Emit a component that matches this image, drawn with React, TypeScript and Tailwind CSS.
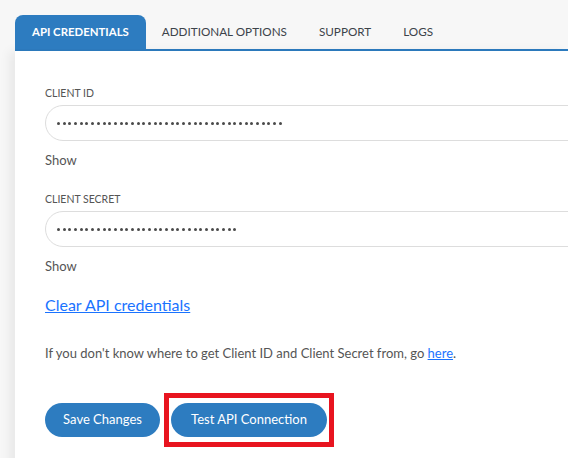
import React from "react";

const font = { fontFamily: "Lato, 'Open Sans', sans-serif" };

function Dots({ n }: { n: number }) {
  return (
    <div className="flex items-center gap-[2.7px]">
      {Array.from({ length: n }).map((_, i) => (
        <span key={i} className="block w-[3px] h-[3px] rounded-full bg-[#4a4a4a]" />
      ))}
    </div>
  );
}

export default function App() {
  return (
    <div className="h-[458px] overflow-hidden bg-[#f7f7f7] pt-[15px] pl-[15px]" style={font}>
      <div className="flex h-[36px] border-b-2 border-[#2d7cc0]">
        <div className="flex items-center px-[17px] rounded-t-[8px] bg-[#2d7cc0] text-white font-bold text-[11.4px]">API CREDENTIALS</div>
        <div className="flex items-center px-4 text-[#3c434a] text-[11.7px]">ADDITIONAL OPTIONS</div>
        <div className="flex items-center px-4 text-[#3c434a] text-[11.7px]">SUPPORT</div>
        <div className="flex items-center px-4 text-[#3c434a] text-[11.7px]">LOGS</div>
      </div>
      <div className="h-full bg-white pl-[30px] pt-[35px] shadow-[-6px_0_10px_rgba(0,0,0,0.06)]">
        <div className="text-[10.5px] leading-[14px] text-[#555]">CLIENT ID</div>
        <div className="mt-[5px] h-[36px] w-[560px] rounded-full border border-[#dddddd] flex items-center pl-[11px]">
          <Dots n={40} />
        </div>
        <div className="mt-[10px] text-[13px] leading-[18px] text-[#555]">Show</div>
        <div className="mt-[23px] text-[10.5px] leading-[14px] text-[#555]">CLIENT SECRET</div>
        <div className="mt-[5px] h-[36px] w-[560px] rounded-full border border-[#dddddd] flex items-center pl-[11px]">
          <Dots n={32} />
        </div>
        <div className="mt-[10px] text-[13px] leading-[18px] text-[#555]">Show</div>
        <div className="mt-[18px]">
          <a href="#" className="text-[16px] leading-[22px] text-[#1a73ff] underline">Clear API credentials</a>
        </div>
        <div className="mt-[27px] text-[13px] leading-[18px] text-[#555]">
          If you don't know where to get Client ID and Client Secret from, go{" "}
          <a href="#" className="text-[#1a73ff] underline">here</a>.
        </div>
        <div className="mt-[31px] flex items-center">
          <button className="h-[34px] w-[115px] rounded-full bg-[#2d7cc0] text-white text-[13px]">Save Changes</button>
          <div className="ml-[4px] border-[5px] border-[#e8141f] p-[5px] pl-[2px] pr-[2px]">
            <button className="block h-[34px] w-[156px] rounded-full bg-[#2d7cc0] text-white text-[13px]">Test API Connection</button>
          </div>
        </div>
      </div>
    </div>
  );
}
